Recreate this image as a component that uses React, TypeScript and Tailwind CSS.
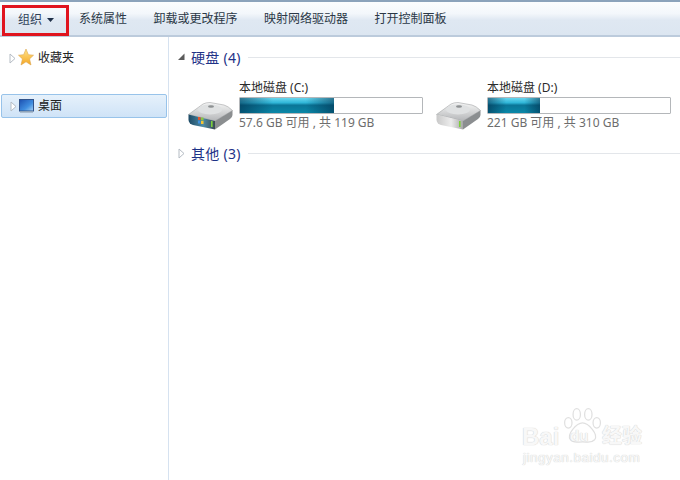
const font = "font-['Noto_Sans','Noto_Sans_CJK_SC',sans-serif]";

function Tri({ filled = false }: { filled?: boolean }) {
  return filled ? (
    <svg width="8" height="8" viewBox="0 0 8 8" className="shrink-0">
      <path d="M6.500 .5V7H0Z" fill="#5b5b5b" />
    </svg>
  ) : (
    <svg width="7" height="11" viewBox="0 0 7 11" className="shrink-0">
      <path d="M1 1L6 5.500L1 10Z" fill="#fff" stroke="#b5bcc4" />
    </svg>
  );
}

function Star() {
  return (
    <svg width="16" height="18" viewBox="0 0 17 19" className="shrink-0">
      <defs>
        <linearGradient id="st" x1="0" y1="0" x2="0" y2="1">
          <stop offset="0" stopColor="#ffe48a" />
          <stop offset="1" stopColor="#f5a623" />
        </linearGradient>
      </defs>
      <path d="M8.5 1L11 7L16.5 7.600L12.300 11.500L13.800 18L8.500 14.600L3.200 18L4.700 11.500L.5 7.600L6 7Z" fill="url(#st)" stroke="#d9a24a" strokeWidth=".6" />
    </svg>
  );
}

function Desktop() {
  return (
    <svg width="15" height="14" viewBox="0 0 15 14" className="shrink-0">
      <defs>
        <linearGradient id="dk" x1="0" y1="0" x2="1" y2="1">
          <stop offset="0" stopColor="#1c4fb0" />
          <stop offset=".6" stopColor="#3f8ee0" />
          <stop offset="1" stopColor="#a9d4f5" />
        </linearGradient>
      </defs>
      <rect x=".5" y=".5" width="14" height="11.500" fill="url(#dk)" stroke="#31538a" />
      <rect x="1" y="12" width="13" height="1.600" fill="#8fa3b8" />
    </svg>
  );
}

function Drive({ win, id }: { win?: boolean; id: string }) {
  return (
    <svg width="45" height="28" viewBox="0 0 45 28" className="shrink-0">
      <defs>
        <linearGradient id={id + "t"} x1="0" y1="0" x2="0" y2="1">
          <stop offset="0" stopColor="#f6f6f6" />
          <stop offset="1" stopColor="#b4b6b8" />
        </linearGradient>
        <linearGradient id={id + "f"} x1="0" y1="0" x2="1" y2="0">
          <stop offset="0" stopColor={win ? "#1d4a66" : "#c9c9c9"} />
          <stop offset=".55" stopColor={win ? "#4f8ca6" : "#ececec"} />
          <stop offset="1" stopColor={win ? "#3a4a50" : "#a8a8a8"} />
        </linearGradient>
      </defs>
      <path d="M0.500 12.500L15 2Q18 .5 22 .5L36 3Q40 4 44.500 8.500L27 19Z" fill={`url(#${id}t)`} stroke="#a2a4a6" strokeWidth=".6" />
      <ellipse cx="22" cy="7.500" rx="12" ry="5" fill="#dfe1e2" />
      <ellipse cx="23" cy="4.500" rx="3" ry="1.300" fill="#8e9193" />
      <path d="M0.500 12.500L27 19V27.500L5 23Q1 22 .5 18Z" fill={`url(#${id}f)`} />
      <path d="M27 19L44.500 8.500V13Q44.500 15 42 17L27 27.500Z" fill="#8b8e90" />
      <rect x="23" y="19" width="1.600" height="6" fill="#7ccf3a" />
      {win && (
        <g>
          <rect x="10" y="15" width="2.500" height="3" fill="#e2562d" />
          <rect x="13" y="15.500" width="2.500" height="3" fill="#8cc63f" />
          <rect x="10" y="18.500" width="2.500" height="3" fill="#3f8fe0" />
          <rect x="13" y="19" width="2.500" height="3" fill="#f7c531" />
        </g>
      )}
    </svg>
  );
}

function DriveItem({ name, pct, info, win, id, w }: { name: string; pct: number; info: string; win?: boolean; id: string; w: string }) {
  return (
    <div className={`flex items-end gap-[6px] ${w}`}>
      <div className="pb-[2px]">
        <Drive win={win} id={id} />
      </div>
      <div className="flex flex-col w-[184px]">
        <div className="text-[12px] leading-[17px] text-[#2a2a2a] whitespace-nowrap">{name}</div>
        <div className="h-[17px] w-full border border-[#b4b7ba] rounded-[1px] bg-white mt-[1px] overflow-hidden">
          <div
            className="h-full bg-[linear-gradient(180deg,#6ad6ee_0%,#2fb6d8_32%,#0a7597_48%,#0a88a8_100%)]"
            style={{ width: `${pct}%` }}
          >
            <div className="h-full w-full bg-[linear-gradient(90deg,rgba(0,40,70,.55)_0%,rgba(0,40,70,0)_35%,rgba(0,40,70,0)_70%,rgba(0,40,70,.55)_100%)]" />
          </div>
        </div>
        <div className="text-[12px] leading-[18px] text-[#6d6d6d] whitespace-nowrap">{info}</div>
      </div>
    </div>
  );
}

function Group({ title, filled }: { title: string; filled?: boolean }) {
  return (
    <div className="flex items-center h-[20px]">
      <div className="w-[13px] flex justify-start">
        <Tri filled={filled} />
      </div>
      <span className="text-[14px] text-[#1e3287] whitespace-nowrap tracking-[0.3px]">{title}</span>
      <div className="flex-1 h-px ml-[7px] bg-[#e3e6ea]" />
    </div>
  );
}

export default function App() {
  const items = ["系统属性", "卸载或更改程序", "映射网络驱动器", "打开控制面板"];
  return (
    <div className={`relative w-[680px] h-[480px] overflow-hidden bg-white flex flex-col ${font}`}>
      <div className="h-[37px] shrink-0 flex items-center border-t-2 border-t-[#8ba3bb] border-b-2 border-b-[#bccbdc] bg-[linear-gradient(180deg,#fbfdfe_0%,#f3f7fb_35%,#dfe8f2_55%,#dce6f1_100%)] text-[12px] text-[#2b3846]">
        <div className="ml-[2px] mt-[4px] w-[67px] h-[31px] border-[3px] border-[#e0141e] flex items-center pl-[13px] pb-[2px] gap-[5px] text-[#2f4158]">
          <span>组织</span>
          <svg width="7" height="4" viewBox="0 0 7 4"><path d="M0 0H7L3.500 4Z" fill="#1f3048" /></svg>
        </div>
        <div className="flex ml-[10px] gap-[26.5px] pt-[1px]">
          {items.map((t) => (
            <span key={t} className="whitespace-nowrap">{t}</span>
          ))}
        </div>
      </div>
      <div className="flex flex-1 min-h-0">
        <div className="w-[169px] shrink-0 border-r border-[#d6e2f0] pt-[11px] pl-[1px] pr-[2px] text-[12px] text-[#222]">
          <div className="flex items-center h-[20px] pl-[8px]">
            <Tri />
            <div className="ml-[2px] -mt-[3px]"><Star /></div>
            <span className="ml-[4px]">收藏夹</span>
          </div>
          <div className="mt-[26px] h-[24px] w-[166px] flex items-center pl-[8px] rounded-[2px] border border-[#98c3ea] bg-[linear-gradient(180deg,#e6f1fb_0%,#cfe3f7_100%)]">
            <Tri />
            <div className="ml-[2px]"><Desktop /></div>
            <span className="ml-[4px]">桌面</span>
          </div>
        </div>
        <div className="flex-1 min-w-0 pt-[10px] pl-[9px]">
          <Group title="硬盘 (4)" filled />
          <div className="flex mt-[12px] pl-[10px]">
            <DriveItem name="本地磁盘 (C:)" pct={51.5} info="57.6 GB 可用 , 共 119 GB" win id="c" w="w-[248px]" />
            <DriveItem name="本地磁盘 (D:)" pct={28.5} info="221 GB 可用 , 共 310 GB" id="d" w="w-[240px]" />
          </div>
          <div className="mt-[11px]">
            <Group title="其他 (3)" />
          </div>
        </div>
      </div>
      <div className="absolute left-[522px] top-[406px] w-[124px] h-[62px] text-[#f8f8f8] [text-shadow:0_0_1px_#d4d4d4,0_0_1px_#d4d4d4]">
        <svg width="40" height="38" viewBox="0 0 38 36" className="absolute left-[40px] top-[1px]">
          <g fill="#fff" stroke="#e0e0e0" strokeWidth="1.200">
            <ellipse cx="6" cy="15" rx="3.500" ry="5" />
            <ellipse cx="14" cy="7" rx="3.500" ry="5.500" />
            <ellipse cx="25" cy="7" rx="3.500" ry="5.500" />
            <ellipse cx="33" cy="15" rx="3.500" ry="5" />
            <path d="M19.500 15C25 15 35 26 31 31C27 35 24 33 19.500 33C15 33 11 35 8 31C4 26 14 15 19.500 15Z" />
          </g>
        </svg>
        <span className="absolute left-0 top-[18px] text-[24px] leading-[26px] font-bold font-['Liberation_Sans',sans-serif]">Bai</span>
        <span className="absolute left-[48px] top-[21px] text-[15px] leading-[18px] font-bold font-['Liberation_Sans',sans-serif]">du</span>
        <span className="absolute left-[80px] top-[18px] text-[20px] leading-[24px] font-bold">经验</span>
        <span className="absolute left-[1px] top-[45px] text-[13.5px] leading-[14px] tracking-[0.5px] whitespace-nowrap font-['Liberation_Sans',sans-serif]">jingyan.baidu.com</span>
      </div>
    </div>
  );
}
